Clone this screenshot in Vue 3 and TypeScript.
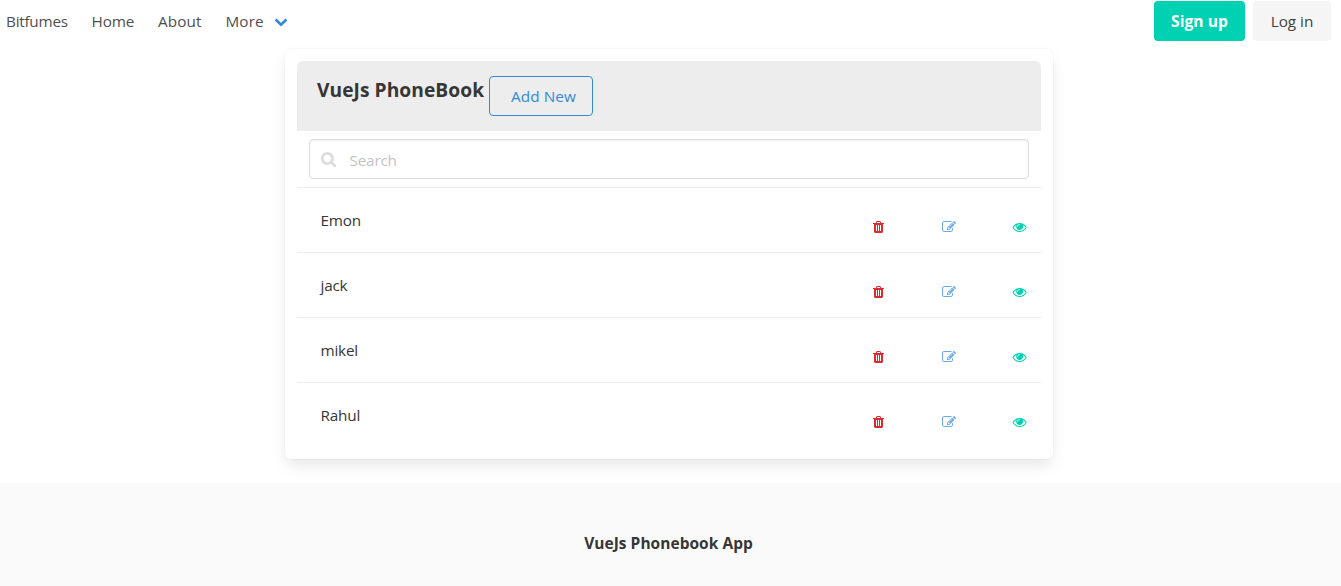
<script setup lang="ts">
import { ref, computed } from 'vue'

interface Contact {
  id: number
  name: string
}

const contacts: Contact[] = [
  { id: 1, name: 'Emon' },
  { id: 2, name: 'jack' },
  { id: 3, name: 'mikel' },
  { id: 4, name: 'Rahul' },
]

const links: string[] = ['Bitfumes', 'Home', 'About']
const query = ref<string>('')
const visible = computed<Contact[]>(() =>
  contacts.filter((c) => c.name.toLowerCase().includes(query.value.toLowerCase())),
)
</script>

<template>
  <div class="page">
    <nav class="navbar">
      <div class="start">
        <a v-for="link in links" :key="link" class="item" :class="link.toLowerCase()">{{ link }}</a>
        <a class="item more">
          <span>More</span>
          <svg class="chevron" viewBox="0 0 14 9"><path d="M1.6 1.5 7 6.8 12.4 1.5" /></svg>
        </a>
      </div>
      <div class="buttons">
        <a class="button primary">Sign up</a>
        <a class="button light">Log in</a>
      </div>
    </nav>

    <main class="card">
      <header class="heading">
        <h1 class="title">VueJs PhoneBook</h1>
        <button class="add" type="button">Add New</button>
      </header>
      <div class="search">
        <label class="field">
          <svg class="glass" viewBox="56 0 1792 1792"><path d="M1216 832q0-185-131.5-316.5t-316.5-131.5-316.5 131.5-131.5 316.5 131.5 316.5 316.5 131.5 316.5-131.5 131.5-316.5zm512 832q0 52-38 90t-90 38q-54 0-90-38l-343-342q-179 124-399 124-143 0-273.5-55.5t-225-150-150-225-55.5-273.5 55.5-273.5 150-225 225-150 273.5-55.5 273.5 55.5 225 150 150 225 55.5 273.5q0 220-124 399l343 343q37 37 37 90z" /></svg>
          <input v-model="query" class="input" type="text" placeholder="Search" />
        </label>
      </div>
      <div v-for="contact in visible" :key="contact.id" class="row">
        <span class="name">{{ contact.name }}</span>
        <svg class="icon trash" viewBox="64 0 1792 1792"><path d="M704 1376v-704q0-14-9-23t-23-9h-64q-14 0-23 9t-9 23v704q0 14 9 23t23 9h64q14 0 23-9t9-23zm256 0v-704q0-14-9-23t-23-9h-64q-14 0-23 9t-9 23v704q0 14 9 23t23 9h64q14 0 23-9t9-23zm256 0v-704q0-14-9-23t-23-9h-64q-14 0-23 9t-9 23v704q0 14 9 23t23 9h64q14 0 23-9t9-23zm-544-992h448l-48-117q-7-9-17-11h-317q-10 2-17 11zm928 32v64q0 14-9 23t-23 9h-96v948q0 83-47 143.5t-113 60.5h-832q-66 0-113-58.5t-47-141.5v-952h-96q-14 0-23-9t-9-23v-64q0-14 9-23t23-9h309l70-167q15-37 54-63t79-26h320q40 0 79 26t54 63l70 167h309q14 0 23 9t9 23z" /></svg>
        <svg class="icon edit" viewBox="0 0 1792 1792"><path d="M888 1184l116-116-152-152-116 116v56h96v96h56zm440-720q-16-16-33 1l-350 350q-17 17-1 33t33-1l350-350q17-17 1-33zm80 594v190q0 119-84.5 203.5t-203.5 84.5h-832q-119 0-203.5-84.5t-84.5-203.5v-832q0-119 84.5-203.5t203.5-84.5h832q63 0 117 25 15 7 18 23 3 17-9 29l-49 49q-14 14-32 8-23-6-45-6h-832q-66 0-113 47t-47 113v832q0 66 47 113t113 47h832q66 0 113-47t47-113v-126q0-13 9-22l64-64q15-15 35-7t20 29zm-96-738l288 288-672 672h-288v-288zm444 132l-92 92-288-288 92-92q28-28 68-28t68 28l152 152q28 28 28 68t-28 68z" /></svg>
        <svg class="icon eye" viewBox="48 0 1792 1792"><path d="M1664 960q-152-236-381-353 61 104 61 225 0 185-131.5 316.5t-316.5 131.5-316.5-131.5-131.5-316.5q0-121 61-225-229 117-381 353 133 205 333.5 326.5t434.5 121.5 434.5-121.5 333.5-326.5zm-720-384q0-20-14-34t-34-14q-125 0-214.5 89.5t-89.5 214.5q0 20 14 34t34 14 34-14 14-34q0-86 61-147t147-61q20 0 34-14t14-34zm848 384q0 34-20 69-140 230-376.5 368.5t-499.5 138.5-499.5-139-376.5-368q-20-35-20-69t20-69q140-229 376.5-368t499.5-139 499.5 139 376.5 368q20 35 20 69z" /></svg>
      </div>
    </main>

    <footer class="footer"><strong class="brand">VueJs Phonebook App</strong></footer>
  </div>
</template>

<style>
body {
  background: #fff;
}
</style>

<style scoped>
.page,
.page * {
  box-sizing: border-box;
}
.page {
  height: 586px;
  display: flex;
  flex-direction: column;
  overflow: hidden;
  font-family: "Open Sans", "Noto Sans", sans-serif;
  font-size: 15.3px;
  font-weight: 400;
  letter-spacing: -0.2px;
  line-height: 24px;
  color: #4f4f4f;
}
.navbar {
  flex: none;
  height: 49px;
  padding: 1px 10px 8px 6px;
  display: flex;
  justify-content: space-between;
  background: #fff;
}
.start {
  display: flex;
  align-items: center;
}
.item {
  display: flex;
  align-items: center;
  white-space: nowrap;
}
.bitfumes {
  width: 85.5px;
  letter-spacing: -0.25px;
}
.home {
  width: 66.5px;
  letter-spacing: -0.1px;
}
.about {
  width: 67.5px;
  letter-spacing: 0.1px;
}
.more {
  letter-spacing: 0.1px;
}
.more span {
  width: 48.5px;
}
.chevron {
  width: 14px;
  height: 9px;
  margin-top: 2px;
  fill: none;
  stroke: #3289dc;
  stroke-width: 2.6;
}
.buttons {
  display: flex;
  gap: 8px;
}
.button {
  height: 40px;
  display: flex;
  align-items: center;
  justify-content: center;
  border-radius: 4px;
}
.primary {
  width: 91px;
  background: #00d1b2;
  color: #fff;
  font-size: 15.6px;
  font-weight: 700;
  letter-spacing: 0.05px;
}
.light {
  width: 78px;
  background: #f5f5f5;
  color: #424242;
  letter-spacing: 0;
}
.card {
  flex: none;
  width: 768px;
  height: 410px;
  margin-left: 285px;
  padding: 12px;
  border-radius: 6px;
  background: #fff;
  box-shadow: 0 8px 16px -2px rgba(10, 10, 10, 0.1), 0 0 0 1px rgba(10, 10, 10, 0.02);
}
.heading {
  height: 70px;
  padding: 15px 20px;
  display: flex;
  align-items: flex-start;
  border-radius: 6px 6px 0 0;
  background: #ededed;
}
.title {
  width: 172px;
  margin: 0;
  white-space: nowrap;
  font-size: 19.2px;
  line-height: 28px;
  font-weight: 700;
  letter-spacing: 0.05px;
  color: #363636;
}
.add {
  width: 104px;
  height: 40px;
  padding: 0 0 0 5px;
  border: 1px solid #3289dc;
  border-radius: 4px;
  background: transparent;
  color: #3289dc;
  font: inherit;
  letter-spacing: 0.1px;
}
.search {
  height: 57px;
  padding: 8px 12px;
  border-bottom: 1px solid #ededed;
}
.field {
  height: 40px;
  padding: 0 11px 0 10.5px;
  display: flex;
  align-items: center;
  gap: 13px;
  border: 1px solid #dbdbdb;
  border-radius: 4px;
  box-shadow: inset 0 1px 2px rgba(10, 10, 10, 0.06);
}
.glass {
  width: 16px;
  height: 16px;
  fill: #dbdbdb;
  stroke: #dbdbdb;
  stroke-width: 40;
}
.input {
  flex: 1;
  padding: 2px 0 0;
  border: 0;
  outline: 0;
  background: transparent;
  font: inherit;
  letter-spacing: -0.2px;
  color: #363636;
}
.input::placeholder {
  color: #c3c3c3;
  opacity: 1;
}
.row {
  height: 65px;
  padding: 20px 14px 0 23.5px;
  display: flex;
  align-items: flex-start;
  border-bottom: 1px solid #ededed;
  color: #363636;
}
.row:last-child {
  border-bottom: 0;
}
.name {
  flex: 1;
}
.icon {
  width: 14px;
  height: 14px;
  margin-top: 12px;
  overflow: visible;
}
.trash {
  fill: #e0282e;
}
.edit {
  margin-left: 56px;
  fill: #6cabe7;
}
.eye {
  margin-left: 57px;
  fill: #00d1b2;
}
.footer {
  flex: 1;
  margin-top: 24px;
  padding: 48px 4px 0 0;
  text-align: center;
  background: #fafafa;
}
.brand {
  color: #363636;
  font-size: 15.5px;
  font-weight: 700;
  letter-spacing: 0.03px;
}
</style>
